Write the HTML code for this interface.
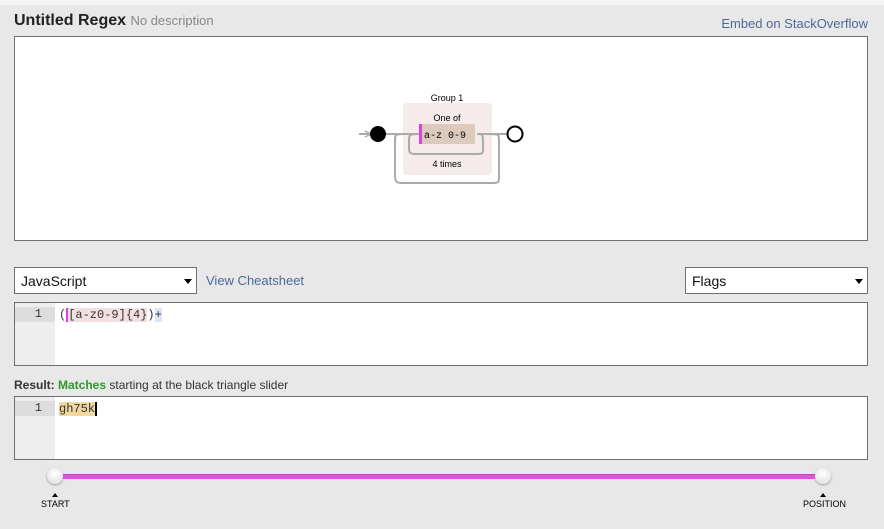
<!DOCTYPE html>
<html><head><style>
body{margin:0;width:884px;height:529px;background:#e8e8e8;font-family:"Liberation Sans",sans-serif;position:relative;overflow:hidden}
.a{position:absolute}
.box{position:absolute;background:#fff;border:1px solid #707070;box-sizing:border-box}
.sel{position:absolute;background:#fff;border:1px solid #707070;box-sizing:border-box;font-size:14px;padding:5px 0 0 6px;color:#111}
.sel:after{content:"";position:absolute;right:4px;top:11px;border:4px solid transparent;border-top:5px solid #000}
.gut{position:absolute;left:0;top:0;bottom:0;width:40px;background:#eee}
.ln{position:absolute;left:0;top:4px;width:40px;height:15px;background:#ddd;font:12px "Liberation Mono",monospace;text-align:right;box-sizing:border-box;padding-right:13px;line-height:15px;color:#333}
.code{position:absolute;left:44px;top:5px;font:12px "Liberation Mono",monospace;line-height:15px;color:#333}
</style></head><body>
<div class="a" style="left:0;top:0;width:884px;height:5px;background:#f4f4f4"></div>
<div class="a" style="left:14px;top:12px;font-size:16px;font-weight:bold;color:#222">Untitled Regex <span style="font-weight:normal;font-size:13px;color:#888">No description</span></div>
<div class="a" style="right:16px;top:16px;font-size:13px;color:#4a6a9a">Embed on StackOverflow</div>
<div class="box" style="left:14px;top:36px;width:854px;height:205px">
<svg width="852" height="203" style="position:absolute;left:0;top:0">
<text x="432" y="64" font-size="9" text-anchor="middle" font-family="Liberation Sans">Group 1</text>
<rect x="388" y="66" width="89" height="72" rx="4" fill="#f5ebea"/>
<text x="432" y="84" font-size="9" text-anchor="middle" font-family="Liberation Sans">One of</text>
<path d="M344 97H364M364 97H404M462 97H500" stroke="#aaa" stroke-width="2" fill="none"/>
<path d="M350 94l6 3-6 3" stroke="#aaa" stroke-width="1.5" fill="none"/>
<path d="M404 97c-10 0-10 0-10 8v7c0 4 2 5 6 5h62c6 0 6-1 6-5v-7c0-8 0-8-6-8" stroke="#aaa" stroke-width="2" fill="none"/>
<path d="M390 97c-10 0-10 0-10 8v34c0 6 2 7 7 7h91c6 0 6-1 6-7v-34c0-8 0-8-10-8" stroke="#aaa" stroke-width="2" fill="none"/>
<rect x="404" y="87" width="56" height="20" rx="2" fill="#dccbbc"/>
<rect x="404" y="87" width="3" height="20" fill="#e040e0"/>
<text x="409" y="101" font-size="10" font-family="Liberation Mono">a-z 0-9</text>
<text x="432" y="130" font-size="9" text-anchor="middle" font-family="Liberation Sans">4 times</text>
<circle cx="363" cy="97" r="8" fill="#000"/>
<circle cx="500" cy="97" r="7.5" fill="#fff" stroke="#000" stroke-width="2"/>
</svg></div>
<div class="sel" style="left:14px;top:267px;width:183px;height:27px">JavaScript</div>
<div class="a" style="left:206px;top:273px;font-size:13px;color:#4a6a9a">View Cheatsheet</div>
<div class="sel" style="left:685px;top:267px;width:183px;height:27px">Flags</div>
<div class="box" style="left:14px;top:302px;width:854px;height:64px"><div class="gut"></div><div class="ln">1</div>
<div class="code"><span style="border-right:2px solid #e040e0">(</span><span style="background:#f2e0e0">[a-z0-9]{4}</span>)<span style="background:#dde4f8">+</span></div></div>
<div class="a" style="left:14px;top:378px;font-size:12px;color:#333"><b>Result:</b> <b style="color:#2a9a2a">Matches</b> starting at the black triangle slider</div>
<div class="box" style="left:14px;top:396px;width:854px;height:64px"><div class="gut"></div><div class="ln">1</div>
<div class="code"><span style="background:#f0d8a0">gh75k</span><span style="border-left:2px solid #000"></span></div></div>
<div class="a" style="left:55px;top:474px;width:768px;height:4px;background:#e050e0;border-top:1px solid #c040c0"></div>
<div class="a" style="left:47px;top:468px;width:16px;height:16px;border-radius:50%;background:radial-gradient(circle at 50% 35%,#fff,#ddd);box-shadow:0 1px 2px #999"></div>
<div class="a" style="left:815px;top:468px;width:16px;height:16px;border-radius:50%;background:radial-gradient(circle at 50% 35%,#fff,#ddd);box-shadow:0 1px 2px #999"></div>
<div class="a" style="left:52px;top:490px;border:3px solid transparent;border-bottom:4px solid #000"></div>
<div class="a" style="left:820px;top:490px;border:3px solid transparent;border-bottom:4px solid #000"></div>
<div class="a" style="left:41px;top:499px;font-size:9px">START</div>
<div class="a" style="left:803px;top:499px;font-size:9px">POSITION</div>
</body></html>
